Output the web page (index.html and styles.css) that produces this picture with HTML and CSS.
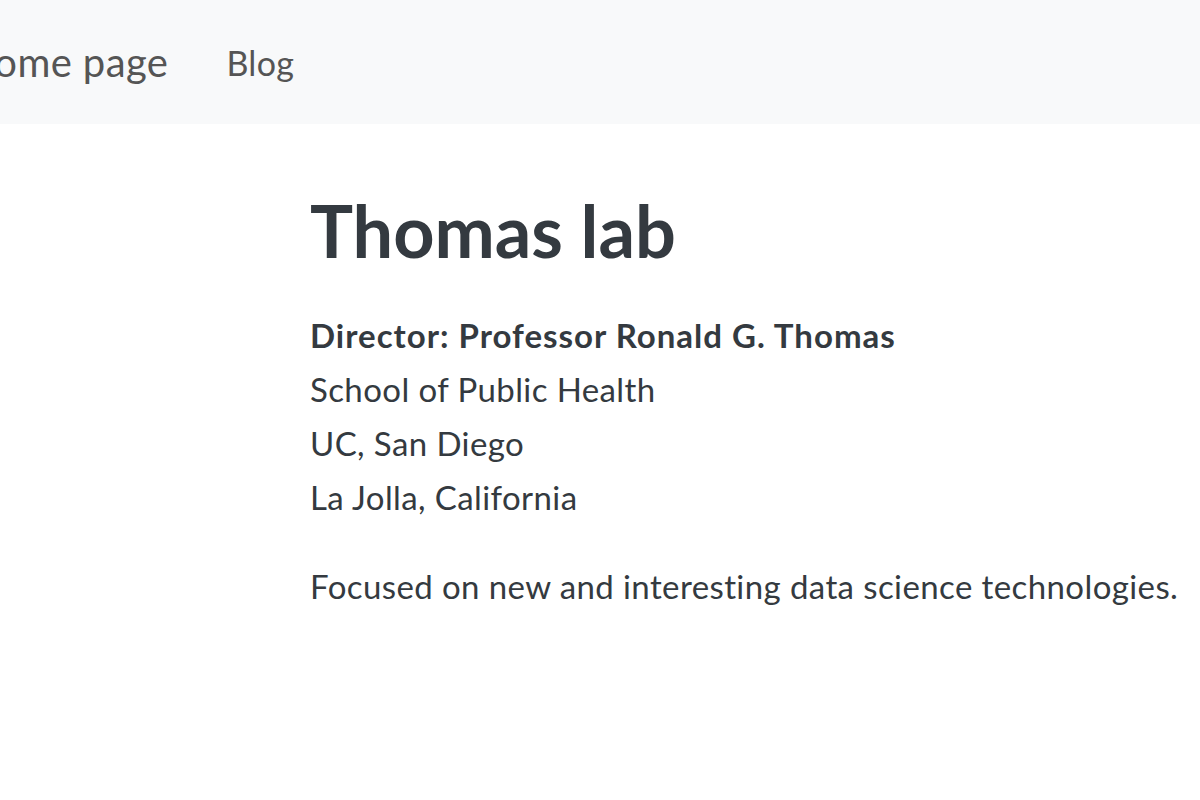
FILE: index.html
```html
<!DOCTYPE html>
<html>
<head>
<meta charset="utf-8">
<link rel="stylesheet" href="styles.css">
</head>
<body>
<header class="navbar">
  <a class="brand" href="#">Home page</a>
  <a class="nav-link" href="#">Blog</a>
</header>
<main class="content">
  <h1 class="title">Thomas lab</h1>
  <p class="address">
    <strong>Director: Professor Ronald G. Thomas</strong><br>
    School of Public Health<br>
    UC, San Diego<br>
    La Jolla, California
  </p>
  <p class="focus">Focused on new and interesting data science technologies.</p>
</main>
</body>
</html>
```

FILE: styles.css
```css
html, body {
  margin: 0;
  padding: 0;
  background: #ffffff;
}
body {
  font-family: Lato, "Noto Sans", sans-serif;
  color: #343a40;
}
.navbar {
  height: 124px;
  background: #f8f9fa;
  display: flex;
  align-items: center;
  margin-left: -36px;
  gap: 58px;
}
.brand {
  font-size: 40px;
  letter-spacing: 0.4px;
  color: #555;
  text-decoration: none;
}
.nav-link {
  font-size: 34px;
  letter-spacing: 0.3px;
  color: #555;
  text-decoration: none;
}
.content {
  padding-left: 310px;
  padding-top: 63px;
}
.title {
  font-size: 72px;
  font-weight: 700;
  line-height: 1.2;
  margin: 0 0 35px 0;
}
.address {
  font-size: 33px;
  line-height: 54px;
  letter-spacing: 0.4px;
  margin: 0 0 35px 0;
}
.address strong {
  font-weight: 700;
  letter-spacing: 1px;
}
.focus {
  font-size: 33px;
  line-height: 54px;
  letter-spacing: 0.4px;
  margin: 0;
}
```
